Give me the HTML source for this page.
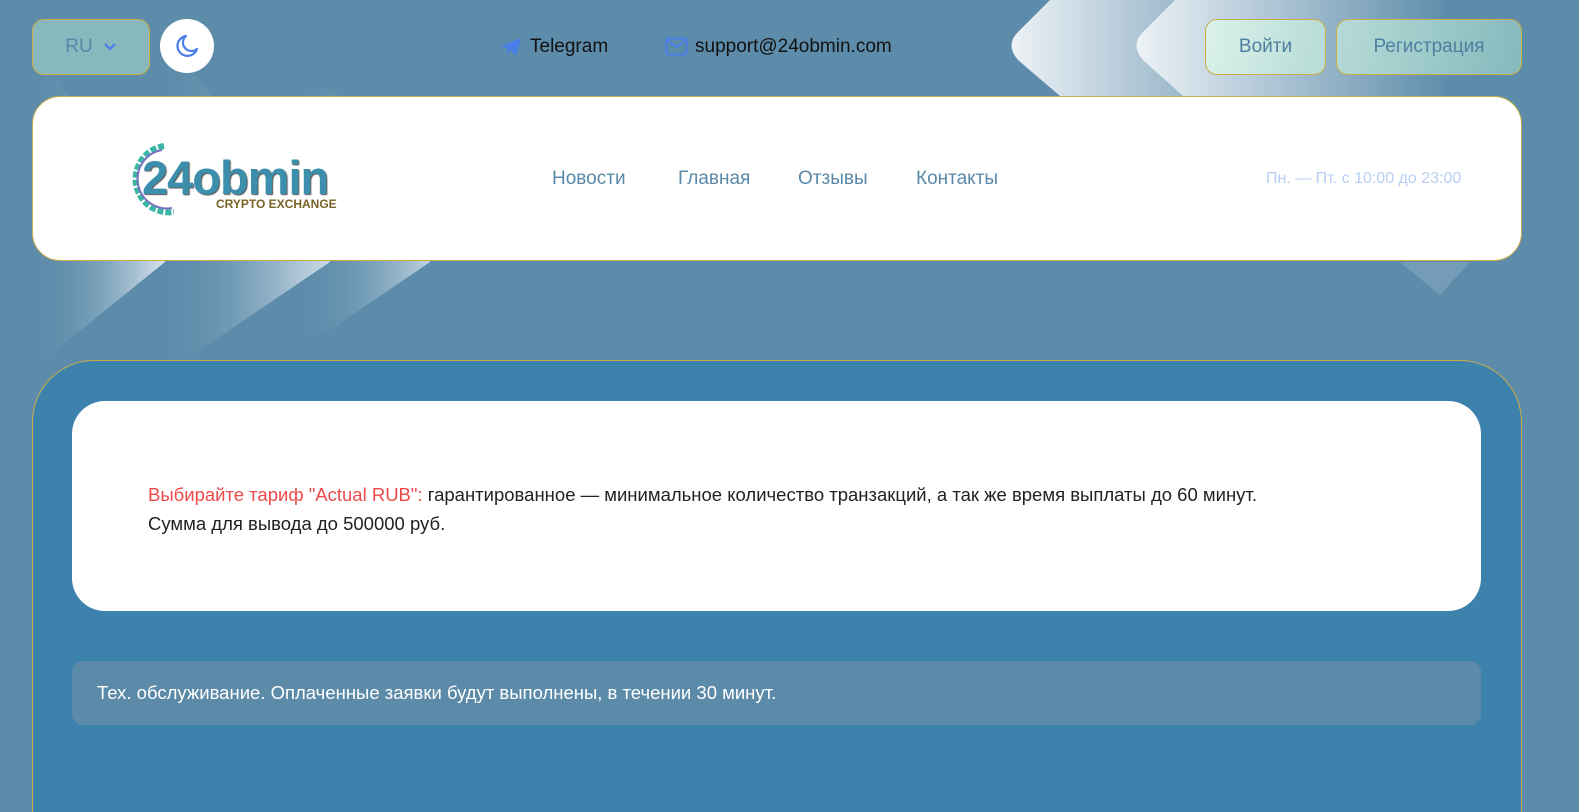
<!DOCTYPE html>
<html style="overflow:hidden"><head><meta charset="utf-8"><style>
*{box-sizing:border-box;margin:0;padding:0}
html,body{width:1579px;height:812px;overflow:hidden}
body{background:#5d8caa;font-family:"Liberation Sans",sans-serif;position:relative}
.abs{position:absolute}
.btn{position:absolute;border:1px solid #c9ae4a;border-radius:12px;display:flex;align-items:center;justify-content:center;font-size:19px;color:#4f7fa0}
.nav a{position:absolute;top:168px;font-size:19px;color:#5a88a8;text-decoration:none}
</style></head><body>
<svg class="abs" style="left:0;top:0" width="1579" height="812">
<defs>
<linearGradient id="g1" x1="0" x2="1" y1="0" y2="0"><stop offset="0" stop-color="#5d8caa" stop-opacity="0"/><stop offset="1" stop-color="#e6eef4" stop-opacity=".9"/></linearGradient>
<linearGradient id="g2" x1="0" x2="1" y1="0" y2="0"><stop offset="0" stop-color="#edf2f6"/><stop offset="1" stop-color="#5d8caa"/></linearGradient>
</defs>
<path d="M33 355 L33 80 Q33 65 50 65 L165 262 L50 355 Z" fill="url(#g1)"/>
<path d="M163 360 L163 75 Q163 60 185 60 L330 262 L185 360 Z" fill="url(#g1)"/>
<path d="M300 340 L300 100 Q310 85 335 90 L430 262 L330 330 Z" fill="url(#g1)" opacity=".8"/>
<path d="M1050 0 L1310 0 L1310 96 L1060 96 L1018 60 Q1005 45 1018 32 Z" fill="url(#g2)"/>
<path d="M1175 0 L1450 0 L1450 96 L1183 96 L1143 60 Q1130 45 1143 32 Z" fill="url(#g2)"/>
<path d="M1400 262 L1470 262 L1440 295 Z" fill="#7fa3bc" opacity=".7"/>
</svg>
<div class="btn" style="left:32px;top:19px;width:118px;height:56px;background:#86b8bd;color:#5b87aa">RU <svg width="14" height="10" style="margin-left:10px" viewBox="0 0 14 10"><path d="M2 2 L7 7 L12 2" stroke="#4a7ee8" stroke-width="2.2" fill="none"/></svg></div>
<div class="abs" style="left:160px;top:19px;width:54px;height:54px;border-radius:50%;background:#fff"><svg width="54" height="54" viewBox="0 0 54 54"><path d="M26 17 A10 10 0 1 0 37 30 A8 8 0 0 1 26 17 Z" stroke="#4a7ee8" stroke-width="2.2" fill="none" stroke-linejoin="round"/></svg></div>
<svg class="abs" style="left:500px;top:37px" width="22" height="20" viewBox="0 0 22 20"><path d="M1 9 L21 1 L16 19 L10 13 L7 18 L7 11 Z" fill="#4a7ee8"/></svg>
<div class="abs" style="left:530px;top:36px;font-size:19px;color:#111">Telegram</div>
<svg class="abs" style="left:665px;top:37px" width="23" height="19" viewBox="0 0 23 19"><rect x="1.5" y="1.5" width="20" height="16" rx="2" stroke="#4a7ee8" stroke-width="2" fill="none"/><path d="M2 3 L11.5 10 L21 3" stroke="#4a7ee8" stroke-width="2" fill="none"/></svg>
<div class="abs" style="left:695px;top:36px;font-size:19px;color:#111">support@24obmin.com</div>
<div class="btn" style="left:1205px;top:19px;width:121px;height:56px;background:linear-gradient(100deg,#daf2ea,#b6dbd5)">Войти</div>
<div class="btn" style="left:1336px;top:19px;width:186px;height:56px;background:linear-gradient(100deg,#b6dbd6,#85b9bd)">Регистрация</div>
<div class="abs" style="left:32px;top:96px;width:1490px;height:165px;background:#fff;border:1px solid #c9ae4a;border-radius:28px"></div>
<svg class="abs" style="left:124px;top:140px" width="50" height="78" viewBox="0 0 50 78"><path d="M40 6 A32 32 0 1 0 50 72" stroke="#3bb5a5" stroke-width="6" fill="none" stroke-dasharray="6 2"/><path d="M38 10 A28 28 0 1 0 48 68" stroke="#7a6fc0" stroke-width="2" fill="none"/></svg>
<div class="abs" style="left:142px;top:150px;font-size:47px;font-weight:bold;color:#3b8fac;letter-spacing:-1px;text-shadow:1px 1px 1px #555">24obmin</div>
<div class="abs" style="left:216px;top:197px;font-size:12px;font-weight:bold;color:#7a6528">CRYPTO EXCHANGE</div>
<div class="nav"><a style="left:552px">Новости</a><a style="left:678px">Главная</a><a style="left:798px">Отзывы</a><a style="left:916px">Контакты</a></div>
<div class="abs" style="left:1266px;top:170px;font-size:16px;color:#b9cef4">Пн. — Пт. с 10:00 до 23:00</div>
<div class="abs" style="left:32px;top:360px;width:1490px;height:452px;background:#3d82ad;border:1px solid #c9ae4a;border-bottom:none;border-radius:62px 62px 0 0"></div>
<div class="abs" style="left:72px;top:401px;width:1409px;height:210px;background:#fff;border-radius:33px"></div>
<div class="abs" style="left:148px;top:480px;width:1240px;font-size:18.5px;line-height:29px;color:#222"><span style="color:#ec4a4a">Выбирайте тариф "Actual RUB":</span> гарантированное — минимальное количество транзакций, а так же время выплаты до 60 минут.<br>Сумма для вывода до 500000 руб.</div>
<div class="abs" style="left:72px;top:661px;width:1409px;height:64px;background:#5c8ba9;border-radius:11px"></div>
<div class="abs" style="left:97px;top:682px;font-size:18.5px;color:#fff">Тех. обслуживание. Оплаченные заявки будут выполнены, в течении 30 минут.</div>
</body></html>
